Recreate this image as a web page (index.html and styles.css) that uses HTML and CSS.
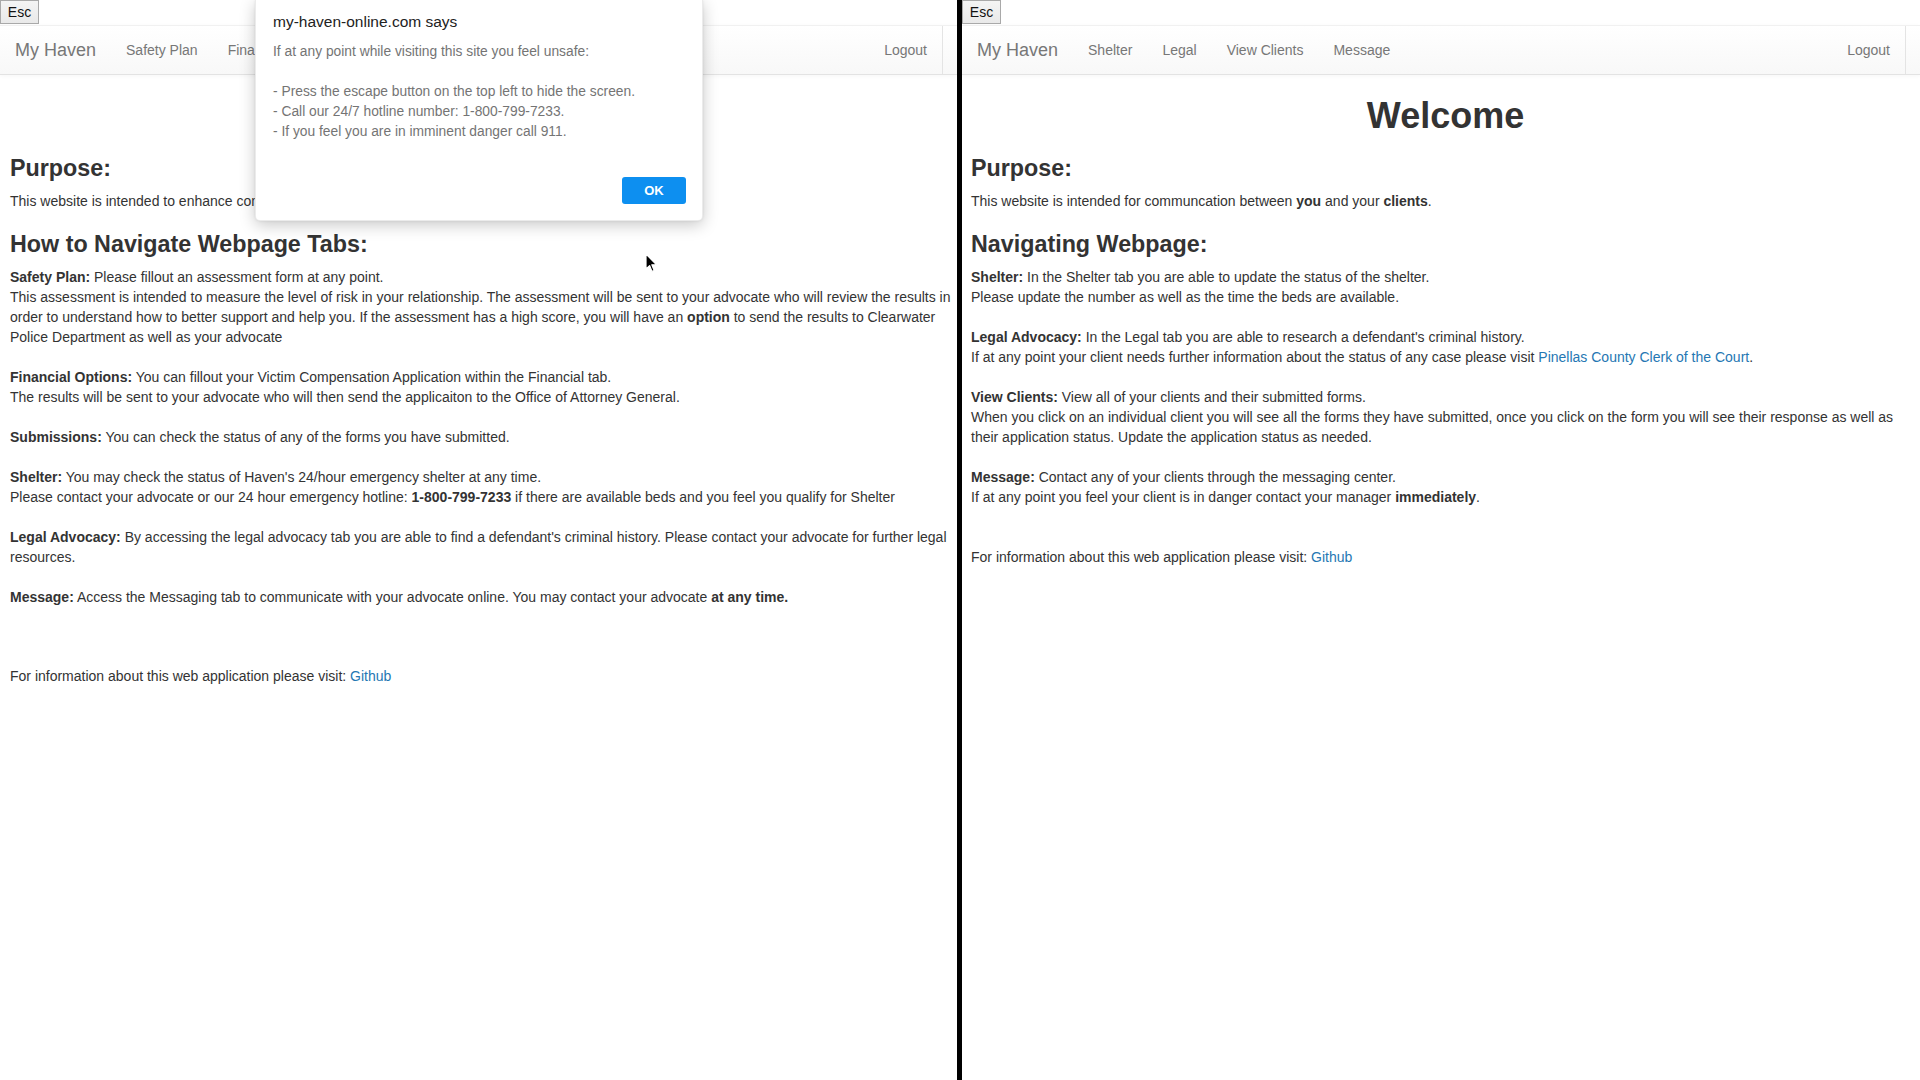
FILE: index.html
```html
<!DOCTYPE html>
<html lang="en">
<head>
<meta charset="utf-8">
<title>My Haven</title>
<link rel="stylesheet" href="styles.css">
</head>
<body>
<div class="split">
  <section class="pane pane-left">
    <div class="esc-row"><button class="esc">Esc</button></div>
    <nav class="navbar">
      <a class="brand" href="#">My Haven</a>
      <ul class="nav">
        <li><a href="#">Safety Plan</a></li>
        <li><a href="#">Financial</a></li>
        <li><a href="#">Submissions</a></li>
        <li><a href="#">Shelter</a></li>
        <li><a href="#">Legal</a></li>
        <li><a href="#">Message</a></li>
      </ul>
      <ul class="nav nav-right">
        <li><a href="#">Logout</a></li>
      </ul>
    </nav>
    <div class="content">
      <h1 class="welcome welcome-hidden" aria-hidden="true">&nbsp;</h1>
      <h3>Purpose:</h3>
      <p class="lead-p">This website is intended to enhance communication between <b>you</b> and your <b>advocate</b>.</p>
      <h3>How to Navigate Webpage Tabs:</h3>
      <p class="sec"><b>Safety Plan:</b> Please fillout an assessment form at any point.<br>This assessment is intended to measure the level of risk in your relationship. The assessment will be sent to your advocate who will review the results in order to understand how to better support and help you. If the assessment has a high score, you will have an <b>option</b> to send the results to Clearwater Police Department as well as your advocate</p>
      <p class="sec"><b>Financial Options:</b> You can fillout your Victim Compensation Application within the Financial tab.<br>The results will be sent to your advocate who will then send the applicaiton to the Office of Attorney General.</p>
      <p class="sec"><b>Submissions:</b> You can check the status of any of the forms you have submitted.</p>
      <p class="sec"><b>Shelter:</b> You may check the status of Haven's 24/hour emergency shelter at any time.<br>Please contact your advocate or our 24 hour emergency hotline: <b>1-800-799-7233</b> if there are available beds and you feel you qualify for Shelter</p>
      <p class="sec"><b>Legal Advocacy:</b> By accessing the legal advocacy tab you are able to find a defendant's criminal history. Please contact your advocate for further legal resources.</p>
      <p class="sec last"><b>Message:</b> Access the Messaging tab to communicate with your advocate online. You may contact your advocate <b>at any time.</b></p>
      <p class="footer-p footer-left">For information about this web application please visit: <a href="#">Github</a></p>
    </div>

    <div class="dialog" role="alertdialog">
      <div class="dialog-title">my-haven-online.com says</div>
      <div class="dialog-body">If at any point while visiting this site you feel unsafe:<br><br>- Press the escape button on the top left to hide the screen.<br>- Call our 24/7 hotline number: 1-800-799-7233.<br>- If you feel you are in imminent danger call 911.</div>
      <div class="dialog-actions"><button class="ok">OK</button></div>
    </div>

    <svg class="cursor" width="13" height="20" viewBox="0 0 13 20" aria-hidden="true">
      <path d="M1 1 L1 16 L4.6 12.6 L7 18.4 L9.2 17.5 L6.8 11.8 L11.6 11.8 Z" fill="#000" stroke="#fff" stroke-width="1.2" stroke-linejoin="round"/>
    </svg>
  </section>

  <div class="divider"></div>

  <section class="pane pane-right">
    <div class="esc-row"><button class="esc">Esc</button></div>
    <nav class="navbar">
      <a class="brand" href="#">My Haven</a>
      <ul class="nav">
        <li><a href="#">Shelter</a></li>
        <li><a href="#">Legal</a></li>
        <li><a href="#">View Clients</a></li>
        <li><a href="#">Message</a></li>
      </ul>
      <ul class="nav nav-right">
        <li><a href="#">Logout</a></li>
      </ul>
    </nav>
    <div class="content">
      <h1 class="welcome">Welcome</h1>
      <h3>Purpose:</h3>
      <p class="lead-p">This website is intended for communcation between <b>you</b> and your <b>clients</b>.</p>
      <h3>Navigating Webpage:</h3>
      <p class="sec"><b>Shelter:</b> In the Shelter tab you are able to update the status of the shelter.<br>Please update the number as well as the time the beds are available.</p>
      <p class="sec"><b>Legal Advocacy:</b> In the Legal tab you are able to research a defendant's criminal history.<br>If at any point your client needs further information about the status of any case please visit <a href="#">Pinellas County Clerk of the Court</a>.</p>
      <p class="sec"><b>View Clients:</b> View all of your clients and their submitted forms.<br>When you click on an individual client you will see all the forms they have submitted, once you click on the form you will see their response as well as their application status. Update the application status as needed.</p>
      <p class="sec last"><b>Message:</b> Contact any of your clients through the messaging center.<br>If at any point you feel your client is in danger contact your manager <b>immediately</b>.</p>
      <p class="footer-p footer-right">For information about this web application please visit: <a href="#">Github</a></p>
    </div>
  </section>
</div>
</body>
</html>
```

FILE: styles.css
```css
html, body {
  margin: 0;
  padding: 0;
  height: 100%;
  background: #fff;
}

body {
  font-family: "Liberation Sans", Arial, Helvetica, sans-serif;
  font-size: 14px;
  line-height: 20px;
  color: #333;
  overflow: hidden;
}

.split {
  display: flex;
  height: 100vh;
}

.pane {
  position: relative;
  overflow: hidden;
  background: #fff;
}

.pane-left {
  width: 957px;
  flex: none;
}

.pane-right {
  flex: 1;
}

.divider {
  width: 5px;
  flex: none;
  background: #000;
}

/* Esc button */
.esc-row {
  height: 25px;
  display: flex;
  align-items: flex-start;
}

.esc {
  box-sizing: border-box;
  width: 39px;
  height: 24px;
  margin: 0;
  padding: 0 0 1px;
  font-family: "Liberation Sans", Arial, sans-serif;
  font-size: 14px;
  color: #111;
  background: linear-gradient(#f4f4f4, #e9e9e9);
  border: 1px solid #a9a9a9;
  border-radius: 0;
}

/* Navbar */
.navbar {
  display: flex;
  align-items: stretch;
  height: 50px;
  box-sizing: border-box;
  border-top: 1px solid #f1f1f1;
  border-bottom: 1px solid #e3e3e3;
  background: linear-gradient(to bottom, #ffffff 0%, #f8f8f8 100%);
  box-shadow: 0 1px 4px rgba(0, 0, 0, 0.04);
}

.brand {
  padding: 0 15px;
  font-size: 18px;
  line-height: 48px;
  color: #777;
  text-decoration: none;
}

.nav {
  display: flex;
  margin: 0;
  padding: 0;
  list-style: none;
}

.nav a {
  display: block;
  padding: 0 15px;
  font-size: 14px;
  line-height: 48px;
  color: #777;
  text-decoration: none;
}

.nav-right {
  margin-left: auto;
  margin-right: 14px;
  border-right: 1px solid #e4e4e4;
}

/* Content */
.content {
  padding: 0 0 0 10px;
}

.pane-right .content {
  padding: 0 0 0 9px;
}

h1.welcome {
  margin: 22px 0 10px;
  font-size: 36px;
  line-height: 38px;
  font-weight: bold;
  text-align: center;
  color: #333;
}

.welcome-hidden {
  visibility: hidden;
}

h3 {
  margin: 20px 0 10px;
  font-size: 23.3px;
  line-height: 26px;
  font-weight: bold;
  color: #333;
}

p {
  margin: 0;
}

.lead-p {
  margin-bottom: 10px;
}

.sec {
  margin-bottom: 20px;
}

.sec.last {
  margin-bottom: 0;
}

.footer-left {
  margin-top: 59px;
}

.footer-right {
  margin-top: 40px;
}

a {
  color: #2577b3;
  text-decoration: none;
}

b {
  font-weight: bold;
  color: #333;
}

/* Alert dialog overlay */
.dialog {
  position: absolute;
  left: 255px;
  top: 0;
  width: 448px;
  height: 221px;
  box-sizing: border-box;
  padding: 12px 16px 16px 17px;
  background: #fff;
  border: 1px solid rgba(0, 0, 0, 0.08);
  border-top: 0;
  border-radius: 0 0 5px 5px;
  box-shadow: 0 4px 16px rgba(0, 0, 0, 0.22), 0 0 3px rgba(0, 0, 0, 0.08);
  display: flex;
  flex-direction: column;
}

.dialog-title {
  font-size: 15.5px;
  line-height: 20px;
  color: #222;
}

.dialog-body {
  margin-top: 10px;
  font-size: 13.8px;
  line-height: 20px;
  color: #747474;
}

.dialog-actions {
  margin-top: auto;
  display: flex;
  justify-content: flex-end;
}

.ok {
  width: 64px;
  height: 27px;
  margin: 0;
  padding: 0;
  border: 0;
  border-radius: 3px;
  background: #0d8ff0;
  color: #fff;
  font-family: "Liberation Sans", Arial, sans-serif;
  font-size: 13px;
  font-weight: bold;
}

.cursor {
  position: absolute;
  left: 645px;
  top: 253px;
}
```
